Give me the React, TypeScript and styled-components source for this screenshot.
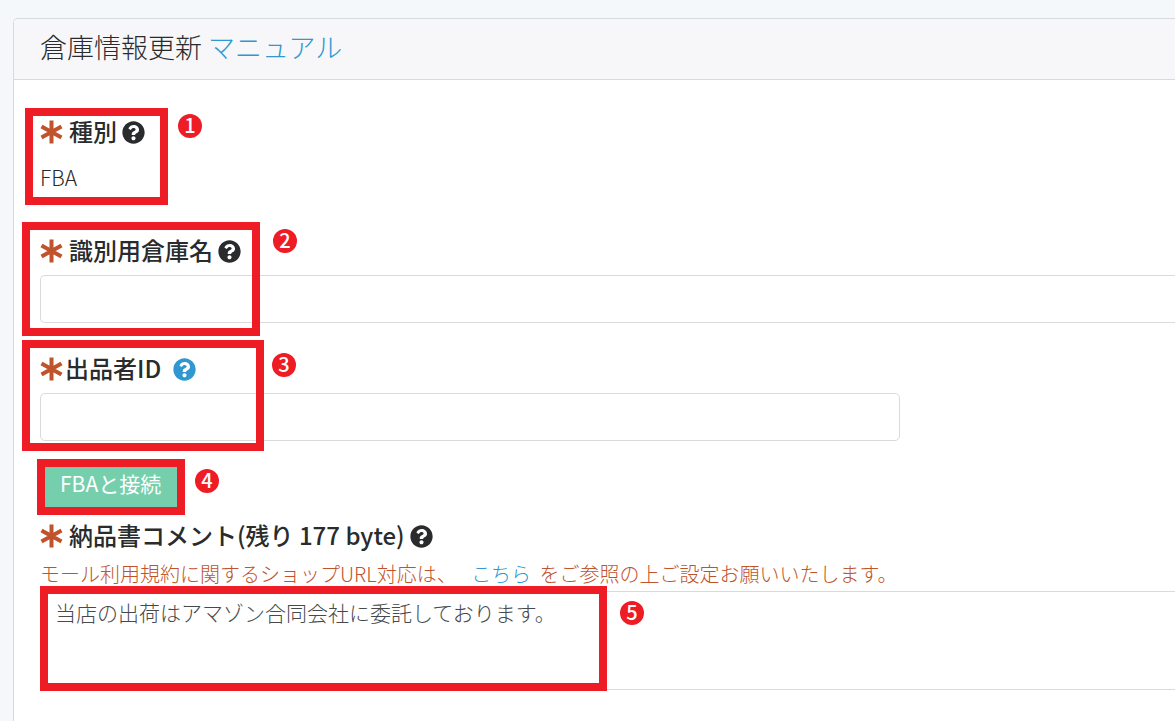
import React, { useState } from "react";
import styled, { createGlobalStyle } from "styled-components";
import { FaQuestionCircle } from "react-icons/fa";

const GlobalStyle = createGlobalStyle`
  *, *::before, *::after { box-sizing: border-box; }
  body {
    margin: 0;
    background: #f4f8fb;
    color: #292b2c;
    font-family: "Noto Sans CJK JP", sans-serif;
    font-size: 21px;
    font-weight: 300;
    line-height: 30px;
  }
  a { color: #3097d1; text-decoration: none; }
`;

const Page = styled.main`
  padding: 18px 0 0 13px;
  overflow: hidden;
`;

const Card = styled.section`
  border: 1px solid #d8dadc;
  border-width: 1px 0 0 1px;
  border-radius: 5px 0 0 0;
  background: #fff;
  overflow: hidden;
`;

const CardHeader = styled.header`
  padding: 8px 26px 12px;
  background: #f7f7f9;
  border-bottom: 1px solid #d8dadc;
`;

const Title = styled.h1`
  margin: 0;
  font-size: 27px;
  font-weight: 300;
  line-height: 40px;
`;

const Form = styled.form`
  display: flex;
  flex-direction: column;
  padding: 34px 0 40px 26px;
`;

const Field = styled.div<{ $after?: number }>`
  position: relative;
  display: flex;
  flex-direction: column;
  align-items: flex-start;
  margin-bottom: ${(p) => p.$after ?? 0}px;
`;

const LabelRow = styled.div<{ $tight?: boolean }>`
  display: flex;
  align-items: center;
  height: 36px;
  gap: ${(p) => (p.$tight ? 1 : 5)}px;
`;

const Label = styled.label`
  padding: 0 0 2px 1px;
  font-size: 24px;
  font-weight: 500;
  line-height: 34px;
  white-space: nowrap;
`;

const RequiredMark = styled.svg`
  flex: none;
  width: 23px;
  height: 24px;
  stroke: #c0532b;
  stroke-width: 4;
`;

const Required = () => (
  <RequiredMark viewBox="0 0 23 24" role="img" aria-label="必須">
    <path d="M11.5 0.5V23.5M1.5 6.4L21.5 17.6M21.5 6.4L1.5 17.6" />
  </RequiredMark>
);

const Help = styled.button<{ $link?: boolean }>`
  display: flex;
  padding: 0;
  border: 0;
  background: none;
  color: ${(p) => (p.$link ? "#3097d1" : "#292b2c")};
  font-size: 23px;
`;

const Value = styled.output`
  margin-top: 12px;
`;

const Input = styled.input<{ $open?: boolean }>`
  width: ${(p) => (p.$open ? "100%" : "860px")};
  max-width: 100%;
  height: 48px;
  margin-top: 6px;
  padding: 8px 16px;
  border: 1px solid #d8dadc;
  border-right-width: ${(p) => (p.$open ? 0 : 1)}px;
  border-radius: ${(p) => (p.$open ? "5px 0 0 5px" : "5px")};
  background: #fff;
  color: #464a4c;
  font: inherit;
`;

const Connect = styled.button`
  height: 48px;
  padding: 0 20px 2px;
  border: 0;
  border-radius: 4px;
  background: #75cfac;
  color: #fff;
  font: inherit;
  font-weight: 400;
`;

const Note = styled.p`
  margin: 5px 0 2px;
  color: #c0532b;
  font-size: 20px;
  white-space: nowrap;

  a { margin: 0 4px 0 10px; }
`;

const Comment = styled.textarea`
  display: block;
  width: 100%;
  height: 99px;
  padding: 5px 14px;
  border: 1px solid #d8dadc;
  border-right: 0;
  border-radius: 5px 0 0 5px;
  background: #fff;
  color: #464a4c;
  font: inherit;
  resize: none;
`;

const Frame = styled.div<{ $x: number; $y: number; $w: number; $h: number }>`
  position: absolute;
  left: ${(p) => p.$x}px;
  top: ${(p) => p.$y}px;
  width: ${(p) => p.$w}px;
  height: ${(p) => p.$h}px;
  border: 8px solid #ee1c24;
  pointer-events: none;
`;

const Badge = styled.span<{ $x: number; $y: number }>`
  position: absolute;
  left: ${(p) => p.$x}px;
  top: ${(p) => p.$y}px;
  width: 24px;
  height: 24px;
  border-radius: 50%;
  background: #ee1c24;
  color: #fff;
  font-size: 20px;
  font-weight: 500;
  line-height: 22px;
  text-align: center;
`;

export default function App() {
  const [comment, setComment] = useState("当店の出荷はアマゾン合同会社に委託しております。");
  return (
    <>
      <GlobalStyle />
      <Page>
        <Card>
          <CardHeader>
            <Title>
              倉庫情報更新 <a href="#manual">マニュアル</a>
            </Title>
          </CardHeader>
          <Form onSubmit={(e) => e.preventDefault()}>
            <Field $after={41}>
              <LabelRow>
                <Required />
                <Label htmlFor="kind">種別</Label>
                <Help type="button" aria-label="種別のヘルプ"><FaQuestionCircle /></Help>
              </LabelRow>
              <Value id="kind">FBA</Value>
              <Frame $x={-15} $y={-6} $w={143} $h={97} />
              <Badge $x={138} $y={0}>1</Badge>
            </Field>
            <Field $after={28}>
              <LabelRow>
                <Required />
                <Label htmlFor="name">識別用倉庫名</Label>
                <Help type="button" aria-label="識別用倉庫名のヘルプ"><FaQuestionCircle /></Help>
              </LabelRow>
              <Input id="name" $open />
              <Frame $x={-18} $y={-11} $w={238} $h={114} />
              <Badge $x={233} $y={-4}>2</Badge>
            </Field>
            <Field $after={19}>
              <LabelRow $tight>
                <Required />
                <Label htmlFor="seller">出品者ID&nbsp;&nbsp;</Label>
                <Help type="button" $link aria-label="出品者IDのヘルプ"><FaQuestionCircle /></Help>
              </LabelRow>
              <Input id="seller" />
              <Frame $x={-18} $y={-11} $w={242} $h={111} />
              <Badge $x={232} $y={2}>3</Badge>
            </Field>
            <Field $after={10}>
              <Connect type="button">FBAと接続</Connect>
              <Frame $x={-3} $y={-1} $w={148} $h={56} />
              <Badge $x={155} $y={9}>4</Badge>
            </Field>
            <Field>
              <LabelRow>
                <Required />
                <Label htmlFor="comment">納品書コメント(残り 177 byte)</Label>
                <Help type="button" aria-label="納品書コメントのヘルプ"><FaQuestionCircle /></Help>
              </LabelRow>
              <Note>
                モール利用規約に関するショップURL対応は、 <a href="#guide">こちら</a> をご参照の上ご設定お願いいたします。
              </Note>
              <Comment id="comment" value={comment} onChange={(e) => setComment(e.target.value)} />
              <Frame $x={0} $y={68} $w={567} $h={105} />
              <Badge $x={580} $y={83}>5</Badge>
            </Field>
          </Form>
        </Card>
      </Page>
    </>
  );
}
